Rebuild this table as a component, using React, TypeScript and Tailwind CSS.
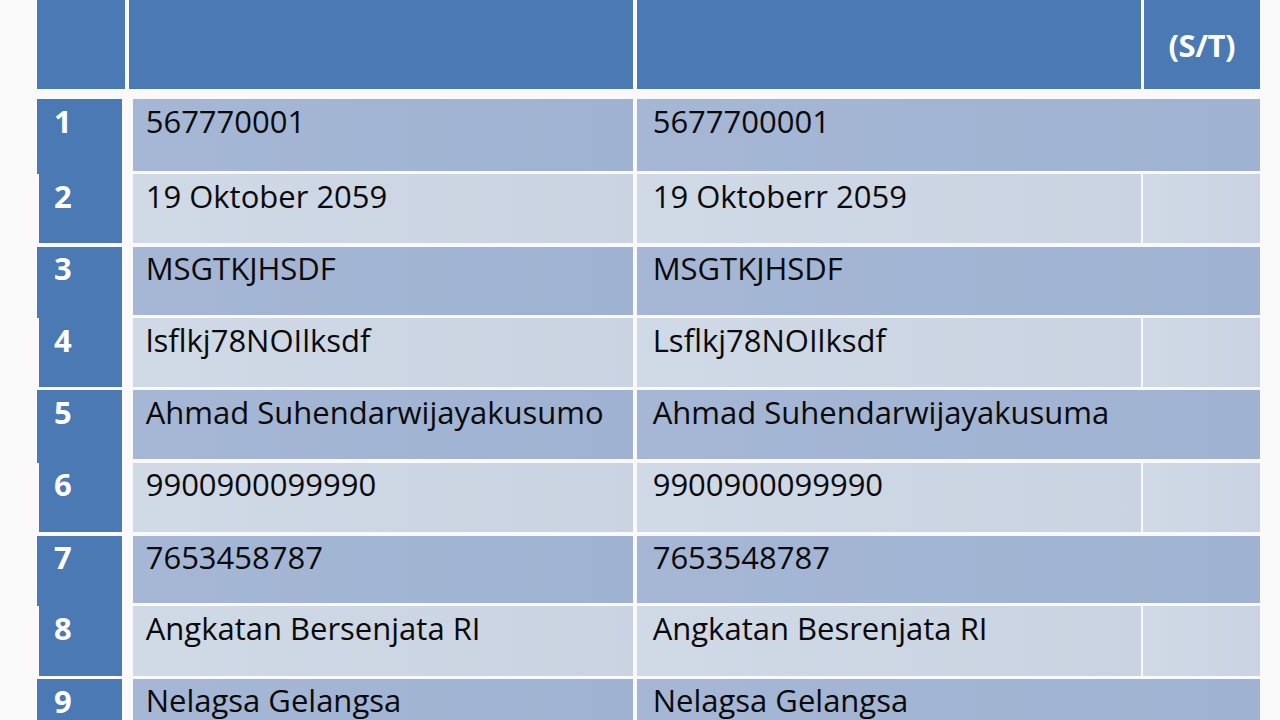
import React from "react";

const rows = [
  { no: "1", left: "567770001", right: "5677700001", h: 71.5 },
  { no: "2", left: "19 Oktober 2059", right: "19 Oktoberr 2059", h: 69 },
  { no: "3", left: "MSGTKJHSDF", right: "MSGTKJHSDF", h: 68.4 },
  { no: "4", left: "lsflkj78NOIlksdf", right: "Lsflkj78NOIlksdf", h: 68.7 },
  { no: "5", left: "Ahmad Suhendarwijayakusumo", right: "Ahmad Suhendarwijayakusuma", h: 69 },
  { no: "6", left: "9900900099990", right: "9900900099990", h: 69.4 },
  { no: "7", left: "7653458787", right: "7653548787", h: 67.3 },
  { no: "8", left: "Angkatan Bersenjata RI", right: "Angkatan Besrenjata RI", h: 69.3 },
  { no: "9", left: "Nelagsa Gelangsa", right: "Nelagsa Gelangsa", h: 70 },
];

const GAP = 3.4;

// pairs of rows share one merged number block
const pairs = [0, 2, 4, 6, 8].map((i) => rows.slice(i, i + 2));

const font = { fontFamily: "'Open Sans', Lato, sans-serif" };

export default function App() {
  return (
    <div
      className="w-[1280px] h-[720px] overflow-hidden bg-[#f9f9f9] text-[31px] leading-[1.2]"
      style={font}
    >
      {/* header */}
      <div className="flex pl-[37px] h-[89px]">
        <div className="w-[88px] bg-[#4a79b4]" />
        <div className="ml-[4px] w-[504px] bg-[#4a79b4]" />
        <div className="ml-[3.5px] w-[504px] bg-[#4a79b4]" />
        <div className="ml-[3px] w-[116.5px] bg-[#4a79b4] flex items-center justify-center pt-[3px]">
          <span className="text-white font-bold tracking-[-0.5px]">(S/T)</span>
        </div>
      </div>

      {/* body */}
      <div className="flex pl-[37px] mt-[10.3px]">
        <div className="flex flex-col w-[85px] gap-[3.4px]">
          {pairs.map((pair) => (
            <div key={pair[0].no} className="flex flex-col">
              <div
                className="w-[85px] bg-[#4a79b4] pl-[17px] pt-[3.5px] text-white font-bold"
                style={{ height: pair[0].h + (pair[1] ? GAP : 0) }}
              >
                {pair[0].no}
              </div>
              {pair[1] && (
                <div
                  className="ml-[2px] w-[83px] bg-[#4a79b4] pl-[15px] pt-[3.5px] text-white font-bold"
                  style={{ height: pair[1].h }}
                >
                  {pair[1].no}
                </div>
              )}
            </div>
          ))}
        </div>

        <div className="ml-[10.7px] flex flex-col gap-[3.4px] text-[#0a0a0a] font-medium">
          {rows.map((r, i) => {
            const odd = i % 2 === 0;
            const bg = odd
              ? "bg-gradient-to-r from-[#a5b7d5] to-[#9fb2d1]"
              : "bg-gradient-to-r from-[#d0d9e6] to-[#cad3e1]";
            return (
              <div key={r.no} className="flex" style={{ height: r.h }}>
                <div className={`w-[500.6px] pl-[13px] pt-[3.5px] whitespace-nowrap ${bg}`}>
                  {r.left}
                </div>
                {odd ? (
                  <div className={`ml-[3.4px] w-[623.3px] pl-[16px] pt-[3.5px] whitespace-nowrap ${bg}`}>
                    {r.right}
                  </div>
                ) : (
                  <>
                    <div className={`ml-[3.4px] w-[504.3px] pl-[16px] pt-[3.5px] whitespace-nowrap ${bg}`}>
                      {r.right}
                    </div>
                    <div className={`ml-[2.3px] w-[116.7px] ${bg}`} />
                  </>
                )}
              </div>
            );
          })}
        </div>
      </div>
    </div>
  );
}
